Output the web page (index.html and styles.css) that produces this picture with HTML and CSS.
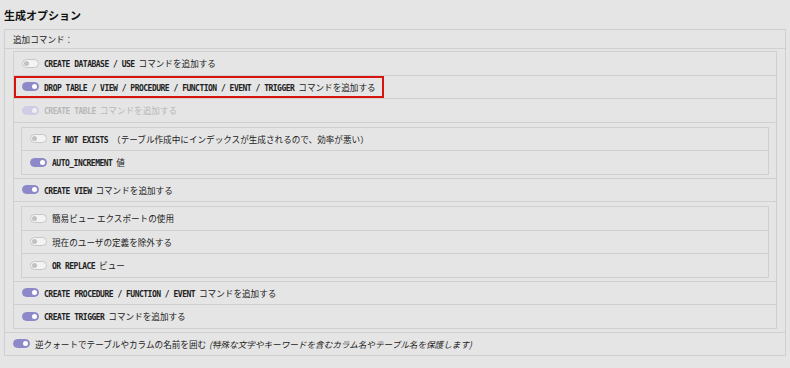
FILE: index.html
```html
<!DOCTYPE html>
<html lang="ja">
<head>
    <meta charset="UTF-8">
    <meta name="viewport" content="width=device-width, initial-scale=1.0">
    <title>生成オプション</title>
    <link rel="stylesheet" href="styles.css">
</head>
<body>
    <h2 class="title">生成オプション</h2>

    <ul class="list">
        <li class="item head">追加コマンド：</li>
        <li class="item nest">
            <ul class="list">
                <li class="item"><span class="switch"></span><span><code>CREATE DATABASE / USE</code> コマンドを追加する</span></li>
                <li class="item marked">
                    <span class="mark"><span class="switch on"></span><span><code>DROP TABLE / VIEW / PROCEDURE / FUNCTION / EVENT / TRIGGER</code> コマンドを追加する</span></span>
                </li>
                <li class="item disabled"><span class="switch on"></span><span><code>CREATE TABLE</code> コマンドを追加する</span></li>
                <li class="item nest">
                    <ul class="list">
                        <li class="item"><span class="switch"></span><span><code>IF NOT EXISTS</code> （テーブル作成中にインデックスが生成されるので、効率が悪い）</span></li>
                        <li class="item"><span class="switch on"></span><span><code>AUTO_INCREMENT</code> 値</span></li>
                    </ul>
                </li>
                <li class="item"><span class="switch on"></span><span><code>CREATE VIEW</code> コマンドを追加する</span></li>
                <li class="item nest">
                    <ul class="list">
                        <li class="item"><span class="switch"></span><span>簡易ビュー エクスポートの使用</span></li>
                        <li class="item"><span class="switch"></span><span>現在のユーザの定義を除外する</span></li>
                        <li class="item"><span class="switch"></span><span><code>OR REPLACE</code> ビュー</span></li>
                    </ul>
                </li>
                <li class="item"><span class="switch on"></span><span><code>CREATE PROCEDURE / FUNCTION / EVENT</code> コマンドを追加する</span></li>
                <li class="item"><span class="switch on"></span><span><code>CREATE TRIGGER</code> コマンドを追加する</span></li>
            </ul>
        </li>
        <li class="item"><span class="switch on"></span><span>逆クォートでテーブルやカラムの名前を囲む <i>(特殊な文字やキーワードを含むカラム名やテーブル名を保護します)</i></span></li>
    </ul>
</body>
</html>
```

FILE: styles.css
```css
body {
    margin: 0;
    background-color: #e5e5e5;
    color: #222;
    font-family: "Noto Sans CJK JP", "Noto Sans", sans-serif;
    font-size: 8.6px;
}

.title {
    margin: 0;
    padding: 8px 4px 7px;
    font-size: 11px;
    line-height: 14px;
    font-weight: bold;
    color: #111;
}

/* List groups */
.list {
    list-style: none;
    margin: 0;
    padding: 0;
    border: 1px solid #d0d0d0;
}
body > .list {
    margin: 0 4px;
}
.item {
    display: flex;
    align-items: center;
    height: 22.5px;
    padding: 0 8px;
    border-bottom: 1px solid #d0d0d0;
    white-space: nowrap;
}
.item:last-child {
    border-bottom: none;
}
.item.head {
    height: 18px;
}
.item.nest {
    display: block;
    height: auto;
    padding: 2px 8px 3px;
}
.list .list .item.nest {
    padding: 4px 7px 3px;
}
.item.disabled {
    color: #b8b8b8;
}

code {
    font-family: "DejaVu Sans Mono", monospace;
    font-size: 8px;
    letter-spacing: -0.5px;
    font-weight: bold;
    margin-right: 2px;
}
i {
    margin-left: 1px;
}

/* Red highlight around a row */
.item.marked {
    padding: 0;
}
.mark {
    display: flex;
    align-items: center;
    height: 100%;
    box-sizing: border-box;
    padding: 0 6px;
    border: 2px solid #d8140f;
}

/* Toggle switch */
.switch {
    position: relative;
    flex: none;
    width: 15px;
    height: 7px;
    margin-right: 5px;
    border: 1px solid #c6c6c6;
    border-radius: 5px;
    background-color: #f3f3f3;
}
.switch::after {
    content: "";
    position: absolute;
    top: 1px;
    left: 1px;
    width: 5px;
    height: 5px;
    border-radius: 50%;
    background-color: #c2c2c2;
}
.switch.on {
    border-color: #8d89c9;
    background-color: #8d89c9;
}
.switch.on::after {
    left: auto;
    right: 1px;
    background-color: #fff;
}
.disabled .switch.on {
    border-color: #cfcde3;
    background-color: #cfcde3;
}
.disabled .switch.on::after {
    background-color: #eeeef6;
}
```
